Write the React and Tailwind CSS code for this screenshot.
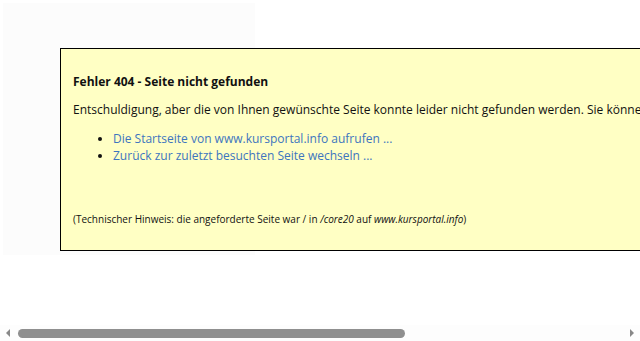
export default function App() {
  return (
    <div className="relative w-[640px] h-[341px] overflow-hidden bg-white flex flex-col" style={{ fontFamily: '"Open Sans", "Liberation Sans", sans-serif' }}>
      <div className="relative flex-1">
        <div className="absolute left-[3px] top-[3px] w-[252px] h-[252px] bg-[#fcfcfc]" />
        <div className="absolute left-[60px] top-[48px] w-[700px] h-[203px] border border-black bg-[#ffffc4] pl-[12px] pt-[23px] text-[12px] text-[#111] whitespace-nowrap">
          <div className="font-bold text-[12px] leading-[20px]">Fehler 404 - Seite nicht gefunden</div>
          <div className="mt-[8px] leading-[20px]">Entschuldigung, aber die von Ihnen gewünschte Seite konnte leider nicht gefunden werden. Sie können es mit folgenden Links versuchen:</div>
          <ul className="mt-[10px] pl-[40px] list-disc text-[12px] leading-[17px] text-[#3d75bf]">
            <li className="marker:text-[#111]">Die Startseite von www.kursportal.info aufrufen ...</li>
            <li className="marker:text-[#111]">Zurück zur zuletzt besuchten Seite wechseln ...</li>
          </ul>
          <div className="mt-[47px] text-[10px] leading-[16px]">
            (Technischer Hinweis: die angeforderte Seite war / in <i>/core20</i> auf <i>www.kursportal.info</i>)
          </div>
        </div>
      </div>
      <div className="h-[16px] flex items-center bg-[#fdfdfd]">
        <div className="w-[16px] flex items-center justify-center">
          <div className="w-0 h-0 border-t-[4px] border-b-[4px] border-r-[4px] border-t-transparent border-b-transparent border-r-[#888]" />
        </div>
        <div className="flex-1 h-full flex items-center pl-[2px]">
          <div className="w-[387px] h-[9px] rounded-full bg-[#8f8f8f]" />
        </div>
        <div className="w-[16px] flex items-center justify-center">
          <div className="w-0 h-0 border-t-[4px] border-b-[4px] border-l-[4px] border-t-transparent border-b-transparent border-l-[#888]" />
        </div>
      </div>
    </div>
  );
}
